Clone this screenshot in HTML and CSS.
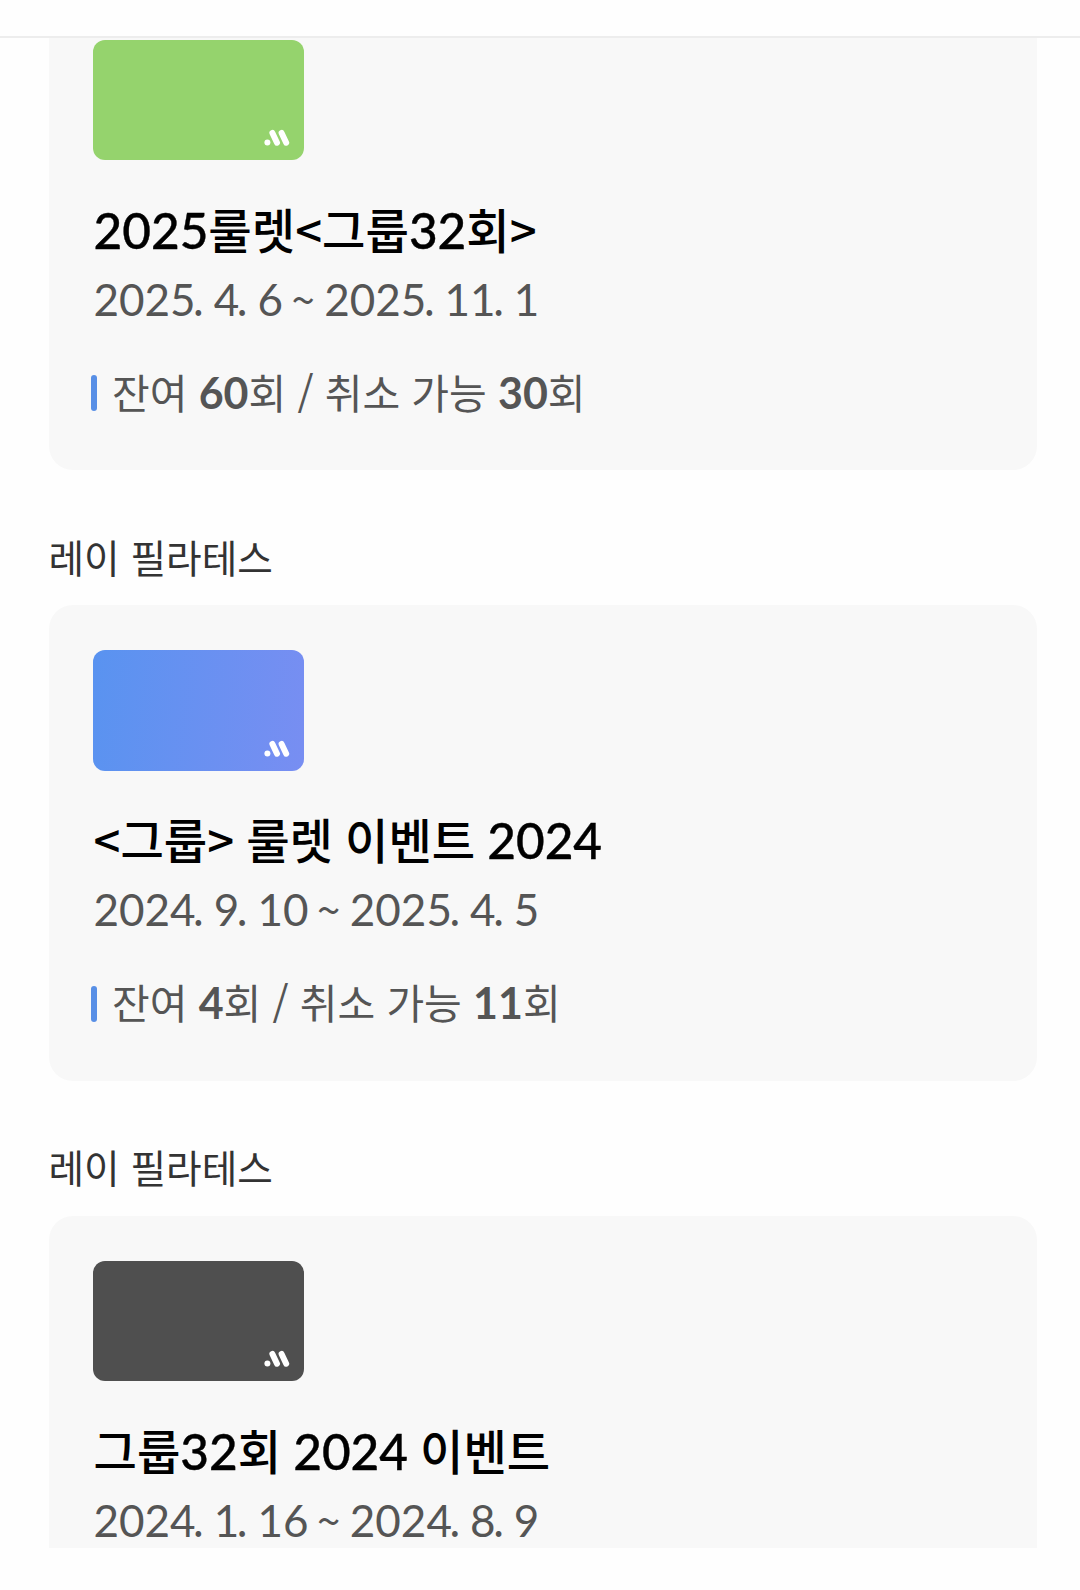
FILE: index.html
```
<!DOCTYPE html>
<html lang="ko">

<head>
    <meta charset="UTF-8">
    <meta name="viewport" content="width=device-width, initial-scale=1.0">
    <title>수강권</title>
    <link rel="stylesheet" href="styles.css">
</head>

<body>

    <div class="header"></div>

    <div class="list">
        <div class="ticket first">
            <div class="thumb green">
                <svg class="logo" viewBox="0 0 26 18">
                    <circle cx="3.4" cy="13.6" r="3" />
                    <path d="M8.4 3.9L13 13.7M17.6 3.9L22.2 13.7" />
                </svg>
            </div>
            <h2 class="title"><i>2025</i>룰렛&lt;그룹<i>32</i>회&gt;</h2>
            <p class="period"><i>2025</i>. <i>4</i>. <i>6</i> ~ <i>2025</i>. <i>11</i>. <i>1</i></p>
            <p class="count"><span>잔여 <b>60</b>회 / 취소 가능 <b>30</b>회</span></p>
        </div>

        <div class="studio">레이 필라테스</div>
        <div class="ticket">
            <div class="thumb blue">
                <svg class="logo" viewBox="0 0 26 18">
                    <circle cx="3.4" cy="13.6" r="3" />
                    <path d="M8.4 3.9L13 13.7M17.6 3.9L22.2 13.7" />
                </svg>
            </div>
            <h2 class="title">&lt;그룹&gt; 룰렛 이벤트 <i>2024</i></h2>
            <p class="period"><i>2024</i>. <i>9</i>. <i>10</i> ~ <i>2025</i>. <i>4</i>. <i>5</i></p>
            <p class="count"><span>잔여 <b>4</b>회 / 취소 가능 <b>11</b>회</span></p>
        </div>

        <div class="studio">레이 필라테스</div>
        <div class="ticket">
            <div class="thumb dark">
                <svg class="logo" viewBox="0 0 26 18">
                    <circle cx="3.4" cy="13.6" r="3" />
                    <path d="M8.4 3.9L13 13.7M17.6 3.9L22.2 13.7" />
                </svg>
            </div>
            <h2 class="title">그룹<i>32</i>회 <i>2024</i> 이벤트</h2>
            <p class="period"><i>2024</i>. <i>1</i>. <i>16</i> ~ <i>2024</i>. <i>8</i>. <i>9</i></p>
        </div>
    </div>

</body>

</html>
```
FILE: styles.css
```
* {
    margin: 0;
    padding: 0;
    box-sizing: border-box;
}

body {
    font-family: "Noto Sans CJK KR", sans-serif;
    background-color: #fefefe;
    height: 1590px;
    overflow: hidden;
}

.header {
    height: 38px;
    border-bottom: 2px solid #ededed;
}

/* 스크롤 영역 */
.list {
    height: 1510px;
    padding: 0 43.5px 0 48.5px;
    overflow: hidden;
}

.ticket {
    height: 475.5px;
    padding: 45px;
    background-color: #f8f8f8;
    border-radius: 24px;
}

.ticket.first {
    margin-top: -43.5px;
}

.thumb {
    display: flex;
    justify-content: flex-end;
    align-items: flex-end;
    width: 211px;
    height: 120.5px;
    margin-left: -0.3px;
    padding: 0 14px 13px 0;
    border-radius: 12px;
}

.green {
    background-color: #95d36d;
}

.blue {
    background: linear-gradient(97deg, #5993f0, #788ef2);
}

.dark {
    background-color: #4f4f4f;
}

.logo {
    width: 26px;
    height: 18px;
    fill: #fff;
}

.logo path {
    stroke: #fff;
    stroke-width: 6;
    stroke-linecap: round;
}

/* 숫자는 Lato */
i,
b {
    font-family: Lato, sans-serif;
    font-style: normal;
    line-height: 1;
    letter-spacing: 0;
}

.title {
    margin-top: 33.6px;
    font-size: 47.2px;
    font-weight: 500;
    line-height: 70px;
    word-spacing: -1.2px;
    color: #000;
    white-space: nowrap;
}

.title i {
    font-size: 49.5px;
    -webkit-text-stroke: 0.4px #000;
}

.period {
    margin-top: 4px;
    font-size: 42px;
    line-height: 60px;
    letter-spacing: -2px;
    word-spacing: 1.7px;
    color: #555;
    white-space: nowrap;
}

.period i {
    margin-right: -3px;
    font-size: 44px;
}

.count {
    display: flex;
    align-items: center;
    margin: 33.2px 0 0 -3px;
    font-size: 41px;
    line-height: 60px;
    word-spacing: -0.3px;
    color: #555;
    white-space: nowrap;
}

.count b {
    font-size: 43px;
}

/* 파란색 세로 막대 */
.count::before {
    content: "";
    width: 6px;
    height: 36px;
    margin-top: 5px;
    margin-right: 15.5px;
    border-radius: 3px;
    background-color: #588fe6;
}

.studio {
    margin-top: 55.5px;
    margin-bottom: 19.5px;
    font-size: 38.7px;
    line-height: 60px;
    color: #333;
}
```
